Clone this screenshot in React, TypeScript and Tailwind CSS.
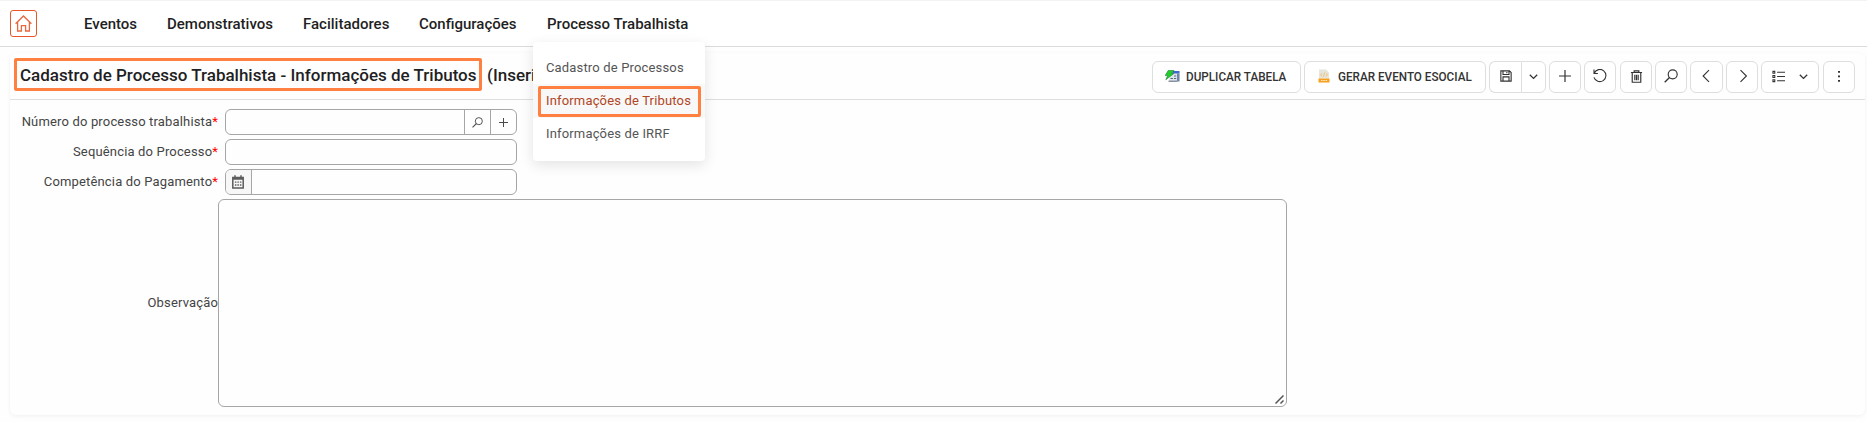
import type { ReactNode } from "react";

const navItems = [
  { label: "Eventos", box: "w-[53px]" },
  { label: "Demonstrativos", box: "w-[106px]" },
  { label: "Facilitadores", box: "w-[86px]" },
  { label: "Configurações", box: "w-[98px]" },
];

function Icon({ size = 14, className = "", children }: { size?: number; className?: string; children: ReactNode }) {
  return (
    <svg width={size} height={size} viewBox="0 0 14 14" fill="none" stroke="currentColor" strokeWidth="1" className={`shrink-0 ${className}`}>
      {children}
    </svg>
  );
}

function SearchIcon({ size = 14 }: { size?: number }) {
  return (
    <Icon size={size}>
      <circle cx="8.7" cy="5.3" r="4.5" strokeWidth="1.15" />
      <path d="M5.5 8.5 0.7 13.3" strokeWidth="1.3" />
    </Icon>
  );
}

function Chevron() {
  return (
    <svg width="9" height="6" viewBox="0 0 9 6" fill="none" stroke="currentColor" strokeWidth="1.3" className="mt-px">
      <path d="M.8 .8 4.5 4.4 8.2 .8" />
    </svg>
  );
}

function Button({ className, children }: { className: string; children: ReactNode }) {
  return (
    <button className={`flex h-8 shrink-0 items-center justify-center rounded-md border border-[#dedede] bg-white pb-[2px] text-[#333] ${className}`}>
      {children}
    </button>
  );
}

function Toolbar() {
  return (
    <div className="flex pt-2 pr-[10px]">
      <Button className="mr-[3px] w-[149px] gap-[6px]">
        <svg width="15" height="12" viewBox="0 0 15 12" className="shrink-0">
          <path d="M5 1.5h9.5v10H4z" fill="#dfe5ee" />
          <path d="M8 1h6.5v2.5H7z" fill="#3a6cc8" />
          <path d="M12 3.5h2.5v8H12z" fill="#6f86a8" />
          <path d="M3.5 11.2h8.5M5.5 8.5H8M9 6h2.2M9 8.5h2.2" stroke="#5b6675" />
          <path d="M3.2 .5H9L6.2 3.6h2.6L.8 9.8l1.9-4.2H.2z" fill="#1fcf2a" stroke="#1d7a35" strokeWidth=".6" />
        </svg>
        <span className="w-[102px] origin-left scale-x-[0.9] text-left text-[13px] leading-none font-medium whitespace-nowrap">DUPLICAR TABELA</span>
      </Button>
      <Button className="mr-[3px] w-[182px] gap-[8px]">
        <svg width="12" height="14" viewBox="0 0 12 14" className="shrink-0">
          <path d="M1 .5h7l3 3v6H1z" fill="#e5e5dc" />
          <path d="m4.2 4.2-1.7 1.6 1.7 1.6M7.8 4.2l1.7 1.6-1.7 1.6M6.6 3.7 5.4 7.8" fill="none" stroke="#f5b95c" strokeWidth=".8" />
          <path d="M.5 9.5h11v4H.5z" fill="#f7a01d" />
          <path d="M3 11.5h1.5M5.3 11.5h1.5M7.6 11.5h1.5" stroke="#fff1d8" />
        </svg>
        <span className="w-[134px] origin-left scale-x-[0.9] text-left text-[13px] leading-none font-medium whitespace-nowrap">GERAR EVENTO ESOCIAL</span>
      </Button>
      <div className="mr-[3px] flex">
        <Button className="w-8 rounded-r-none border-r-0">
          <Icon size={12}>
            <path d="M1 1h10l2 2v10H1zM3.5 1v4.2h7V1M3.5 13V8h7v5M8 2.4v1.5" strokeWidth="1.3" />
          </Icon>
        </Button>
        <Button className="w-[25px] rounded-l-none">
          <Chevron />
        </Button>
      </div>
      <Button className="mr-[3px] w-8">
        <Icon size={12}>
          <path d="M7 0v14M0 7h14" strokeWidth="1.4" />
        </Icon>
      </Button>
      <Button className="mr-1 w-8">
        <Icon>
          <path d="M1.2 4.2A6.1 6.1 0 1 1 1 8.3M1 .6v3.9h3.9" strokeWidth="1.1" />
        </Icon>
      </Button>
      <Button className="mr-[3px] w-8">
        <Icon size={13}>
          <path d="M1 2.7h12M4.5 2.5V1h5v1.5M2.4 3v10.2h9.2V3M5.2 5v6M7 5v6M8.8 5v6" strokeWidth="1.25" />
        </Icon>
      </Button>
      <Button className="mr-[3px] w-8">
        <SearchIcon />
      </Button>
      <Button className="mr-[3px] w-[33px]">
        <Icon className="-ml-[2px]">
          <path d="M10 1.1 4.1 7l5.9 5.9" strokeWidth="1.1" />
        </Icon>
      </Button>
      <Button className="mr-[3px] w-8">
        <Icon className="ml-px">
          <path d="M4.5 1.1 10.4 7l-5.9 5.9" strokeWidth="1.1" />
        </Icon>
      </Button>
      <Button className="mr-1 w-[58px] gap-[14px]">
        <Icon size={13}>
          <path d="M1 1.5h2v2H1zM1 6h2v2H1zM1 10.5h2v2H1zM5.5 2.5H14M5.5 7H14M5.5 11.5H14" strokeWidth="1.15" />
        </Icon>
        <Chevron />
      </Button>
      <Button className="w-8">
        <svg width="2" height="11" viewBox="0 0 2 11" fill="currentColor">
          <path d="M0 0h2v1.8H0zM0 4.5h2v1.8H0zM0 9h2v1.8H0z" />
        </svg>
      </Button>
    </div>
  );
}

function Label({ children, required = false }: { children: ReactNode; required?: boolean }) {
  return (
    <label className="flex w-[208px] shrink-0 justify-end text-[13px] leading-4 tracking-[0.16px] whitespace-nowrap text-[#444]">
      {children}
      {required && <span className="text-[#f00]">*</span>}
    </label>
  );
}

function Field({ label, children }: { label: string; children?: ReactNode }) {
  return (
    <div className="flex h-[30px] items-start">
      <div className="pt-[5px]">
        <Label required>{label}</Label>
      </div>
      <div className="ml-[7px] flex h-[26px] w-[292px] overflow-hidden rounded-md border border-[#a6a6a6] text-[#444]">{children}</div>
    </div>
  );
}

function ProcessMenu() {
  return (
    <div className="absolute top-[41px] -left-[14px] z-10 flex h-[119px] w-[172px] flex-col rounded-[4px] bg-white pt-[9px] text-[13px] font-normal tracking-[0.16px] text-[#555] shadow-[0_4px_14px_rgba(0,0,0,0.11)]">
      <a className="flex h-[33px] items-center pl-[13px]">Cadastro de Processos</a>
      <a className="flex h-[34px] items-center bg-[#f8f8f8] pl-[5px] text-[#b14524]">
        <span className="flex h-[31px] w-[163px] items-center rounded-[2px] border-3 border-[#ff8040] pl-[5px] whitespace-nowrap">
          Informações de Tributos
        </span>
      </a>
      <a className="flex h-[32px] items-center pl-[13px]">Informações de IRRF</a>
    </div>
  );
}

export default function App() {
  return (
    <div className="h-[422px] w-full overflow-hidden bg-[#fefefe] font-['Roboto',sans-serif]">
      <header className="flex h-[47px] border-t border-b border-t-[#f3f3f3] border-b-[#dcdcdc] bg-white pl-[10px]">
        <a className="mt-[9px] flex h-[27px] w-[27px] shrink-0 items-center justify-center rounded-[3px] border border-[#e8562a] text-[#e8673f]">
          <svg width="17" height="17" viewBox="0 0 17 17" fill="none" stroke="currentColor" strokeWidth="1.3">
            <path d="M.6 8.8 8.5 1l7.9 7.8M2.6 7v9h3.8v-5.4h4.2V16h3.8V7" />
          </svg>
        </a>
        <nav className="ml-[47px] flex h-full items-center gap-[30px] text-[15px] font-medium whitespace-nowrap text-[#1f1f24]">
          {navItems.map((item) => (
            <a key={item.label} className={`pt-[2px] ${item.box}`}>
              {item.label}
            </a>
          ))}
          <div className="relative flex h-full items-center">
            <a className="pt-[2px]">Processo Trabalhista</a>
            <ProcessMenu />
          </div>
        </nav>
      </header>

      <main className="mt-[6px] mr-[2px] ml-[10px] h-[362px] rounded-[6px] bg-[#fefefe] shadow-[0_1px_4px_rgba(0,0,0,0.06)]">
        <div className="flex h-[47px] justify-between border-b border-[#dedede]">
          <h1 className="flex pt-[5px] text-[17px] font-medium whitespace-nowrap text-[#1f1f24]">
            <span className="ml-1 flex h-[33px] w-[468px] items-center rounded-[2px] border-3 border-[#ff8040] pt-[2px] pl-[3px]">
              Cadastro de Processo Trabalhista - Informações de Tributos
            </span>
            <span className="ml-[5px] flex h-[33px] items-center pt-[2px]">(Inserir)</span>
          </h1>
          <Toolbar />
        </div>

        <form className="pt-[9px]">
          <Field label="Número do processo trabalhista">
            <input className="w-[238px] outline-none" />
            <button type="button" className="flex w-[26px] items-center justify-center border-l border-[#a6a6a6]">
              <SearchIcon size={11} />
            </button>
            <button type="button" className="flex w-[26px] items-center justify-center border-l border-[#a6a6a6]">
              <Icon size={9}>
                <path d="M7 0v14M0 7h14" strokeWidth="1.5" />
              </Icon>
            </button>
          </Field>
          <Field label="Sequência do Processo">
            <input className="w-full outline-none" />
          </Field>
          <Field label="Competência do Pagamento">
            <button type="button" className="flex w-[26px] items-center justify-center border-r border-[#a6a6a6] bg-[#f7f7f7] pr-px">
              <svg width="12" height="14" viewBox="0 0 12 14" fill="none" stroke="#5c5c5c">
                <path d="M.8 2.5h10.4v10.6H.8zM.8 4h10.4M3 .3v3M9 .3v3" strokeWidth="1.5" />
                <path d="M2.9 7.2h6.5M2.9 10h6.5" strokeWidth="1.3" strokeDasharray="1.5 1" />
              </svg>
            </button>
            <input className="flex-1 outline-none" />
          </Field>
          <div className="flex h-[208px] items-center">
            <Label>Observação</Label>
            <div className="flex h-full w-[1069px] items-end justify-end rounded-md border border-[#a6a6a6] p-[2px]">
              <svg width="9" height="9" viewBox="0 0 9 9" stroke="#555" strokeWidth="1.5">
                <path d="M.5 8.5 8.5 .5M5.5 8.5l3-3" />
              </svg>
            </div>
          </div>
        </form>
      </main>
    </div>
  );
}
